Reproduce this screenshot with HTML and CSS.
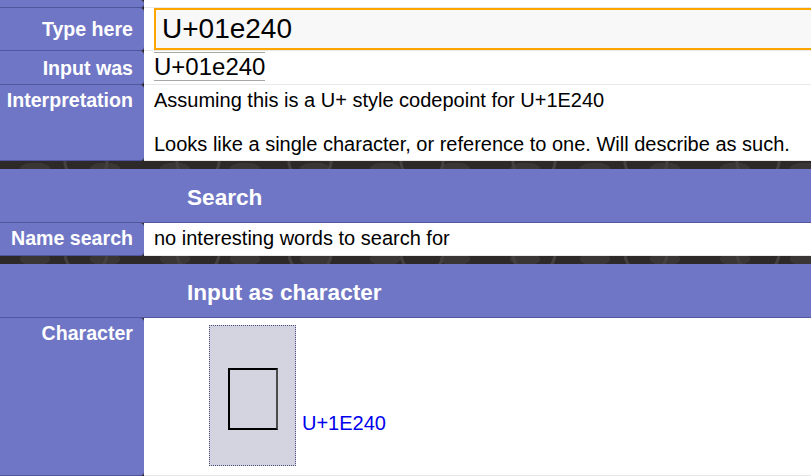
FILE: index.html
```html
<!DOCTYPE html>
<html>
<head>
<meta charset="utf-8">
<title>Unicode lookup</title>
<link rel="stylesheet" href="styles.css">
</head>
<body>
<div class="page">
  <section class="block">
    <div class="row r0"><div class="label"></div><div class="cell"></div></div>
    <div class="row r-type mid">
      <div class="label">Type here</div>
      <div class="cell input-cell"><input class="query" type="text" value="U+01e240"></div>
    </div>
    <div class="row r-was mid">
      <div class="label">Input was</div>
      <div class="cell was-cell"><span class="was">U+01e240</span></div>
    </div>
    <div class="row r-interp">
      <div class="label">Interpretation</div>
      <div class="cell">Assuming this is a U+ style codepoint for U+1E240<br><br>Looks like a single character, or reference to one. Will describe as such.</div>
    </div>
  </section>

  <section class="block">
    <h2 class="heading">Search</h2>
    <div class="row r-name">
      <div class="label">Name search</div>
      <div class="cell">no interesting words to search for</div>
    </div>
  </section>

  <section class="block">
    <h2 class="heading">Input as character</h2>
    <div class="row r-char">
      <div class="label">Character</div>
      <div class="cell char-cell">
        <div class="charbox"><div class="notdef"></div></div>
        <a class="cp" href="#">U+1E240</a>
      </div>
    </div>
  </section>
</div>
</body>
</html>
```

FILE: styles.css
```css
* { box-sizing: border-box; }

body {
  margin: 0;
  font-family: "Liberation Sans", Arial, sans-serif;
  font-size: 20px;
  color: #000;
  background-color: #2e2929;
  background-image:
    radial-gradient(circle, transparent 19px, #454040 20px, #454040 22px, transparent 23px),
    radial-gradient(ellipse, #3b3636 30%, transparent 31%);
  background-size: 112px 46px, 70px 30px;
  background-position: 30px 0, 0 4px;
  overflow: hidden;
}

.page {
  display: flex;
  flex-direction: column;
  gap: 8px;
}

.block {
  display: flex;
  flex-direction: column;
}

.row {
  display: grid;
  grid-template-columns: 144px 1fr;
}

.label {
  background: #6f76c5;
  color: #fff;
  font-weight: bold;
  font-size: 19.6px;
  text-align: right;
  line-height: 22px;
  padding: 4px 11px 0 0;
  border-bottom: 1px solid #51569f;
  border-radius: 0 4px 4px 0;
}

.cell {
  background: #fff;
  line-height: 22px;
  padding: 4px 0 0 10px;
  border-bottom: 1px solid #e8e8e8;
  overflow: hidden;
  white-space: nowrap;
}

.mid .label {
  display: flex;
  align-items: center;
  justify-content: flex-end;
  padding-top: 0;
}

.r0 { height: 8px; }
.r-type { height: 43px; }
.r-was { height: 34px; }
.r-interp { height: 76px; }
.r-name { height: 33px; }
.r-char { height: 158px; }

.input-cell { padding: 0 0 0 10px; }

.query {
  display: block;
  width: 720px;
  height: 42px;
  margin: 0;
  padding: 0 6px;
  border: 2px solid #ffa500;
  background: #f8f8f8;
  font-family: "Liberation Sans", Arial, sans-serif;
  font-size: 28px;
  color: #000;
  outline: none;
}

.was-cell { padding: 1px 0 0 10px; }

.was {
  display: inline-block;
  font-size: 24px;
  line-height: 27px;
  border-top: 1px solid #a8a8a8;
  border-bottom: 1px solid #a8a8a8;
}

.heading {
  margin: 0;
  height: 54px;
  line-height: 53px;
  padding: 2px 0 0 187px;
  background: #6f76c5;
  color: #fff;
  font-size: 22.6px;
  font-weight: bold;
  border-bottom: 1px solid #51569f;
}

.char-cell {
  display: flex;
  align-items: flex-start;
  gap: 6px;
  padding: 7px 0 0 65px;
}

.charbox {
  width: 87px;
  height: 141px;
  border: 1px dotted #4b4b80;
  background: #d4d4e0;
  display: flex;
  justify-content: center;
  padding-top: 42px;
}

.notdef {
  width: 50px;
  height: 62px;
  border: 2px solid #000;
  border-right-color: #4a4a4a;
}

.cp {
  margin-top: 87px;
  color: #0000ee;
  text-decoration: none;
  line-height: 22px;
}
```
